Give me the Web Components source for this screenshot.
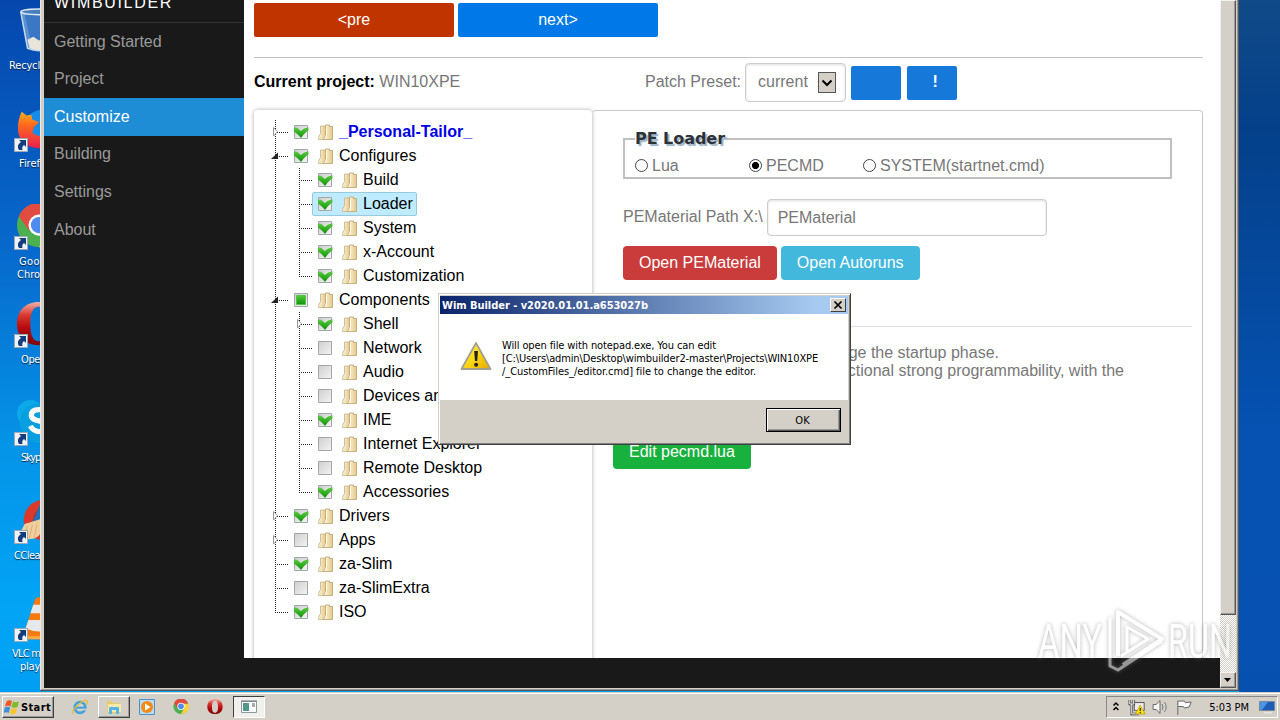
<!DOCTYPE html>
<html lang="en">
<head>
<meta charset="utf-8">
<title>Wim Builder</title>
<style>
  html, body {
    height: 100%;
    margin: 0;
    overflow: hidden;
  }
  body {
    font: 16px/1.15 "Liberation Sans", Arial, sans-serif;
  }
</style>
</head>
<body>
<desk-top></desk-top>

<script>
const define = (name, html, setup) => {
  const template = document.createElement('template')
  template.innerHTML = html

  customElements.define(name, class extends HTMLElement {
    constructor () {
      super()
      this.attachShadow({ mode: 'open' })
      this.shadowRoot.appendChild(template.content.cloneNode(true))
    }

    connectedCallback () {
      if (setup) setup(this, this.shadowRoot)
    }
  })
}

const icons = {
  recycle: `<svg viewBox="0 0 48 48"><path d="M5 4l7 38q12 5 24 0l7-38z" fill="#7aa9dc" opacity=".75"/><path d="M9 6l7 32h10V6z" fill="#2d6cbd" opacity=".7"/><path d="M12 33l6-3 6 4 8-4 2 12q-10 4-20 0z" fill="#e9e5da"/><path d="M5 4l7 38q12 5 24 0l7-38" fill="none" stroke="#c4d8ec" stroke-width="1.6"/><ellipse cx="24" cy="4" rx="19" ry="3" fill="#477fbe" stroke="#e1e8ee" stroke-width="1.5"/></svg>`,
  firefox: `<svg viewBox="0 0 48 48"><defs><linearGradient id="f" x2="0" y2="1"><stop stop-color="#ffb21c"/><stop offset=".35" stop-color="#ff6a1d"/><stop offset="1" stop-color="#e8204e"/></linearGradient></defs><circle cx="27" cy="22" r="18" fill="#168be8"/><path d="M6 6l5 4 5-1 1 5 7 3-5 5-2 5q4 6 12 3l-2 4q8 0 12-7l6 4q-8 14-22 13Q2 42 2 23q0-9 4-17z" fill="url(#f)"/></svg>`,
  chrome: `<svg viewBox="0 0 48 48"><circle cx="24" cy="22" r="23" fill="#4caf50"/><path d="M3 13A23 23 0 0 1 46 14H24l-10 14z" fill="#e24b40"/><path d="M47 16A23 23 0 0 1 24 45l10-18-6-13h18z" fill="#ffd33d"/><circle cx="24" cy="22" r="11" fill="#fff"/><circle cx="24" cy="22" r="8.5" fill="#4d8bf0"/></svg>`,
  opera: `<svg viewBox="0 0 48 48"><defs><linearGradient id="o" x2="0" y2="1"><stop stop-color="#f2b0a6"/><stop offset=".3" stop-color="#d83a30"/><stop offset=".6" stop-color="#b7090f"/><stop offset="1" stop-color="#7d0609"/></linearGradient></defs><path fill-rule="evenodd" d="M24 0C9 0 1 10 1 23s8 22 23 22 23-9 23-22S39 0 24 0zm0 5c7 0 9 7 9 18s-2 18-9 18-9-7-9-18 2-18 9-18z" fill="url(#o)"/></svg>`,
  skype: `<svg viewBox="0 0 48 48"><circle cx="15" cy="14" r="14" fill="#0ca8e8"/><circle cx="25" cy="24" r="21" fill="#079fdf"/><path d="M34 15q-3-5-10-5-8 0-8 6c0 8 17 4 17 11q0 6-8 6-7 0-10-6" fill="none" stroke="#fff" stroke-width="5.5"/></svg>`,
  ccleaner: `<svg viewBox="0 0 48 48"><circle cx="29" cy="23" r="21" fill="#d93a2b"/><circle cx="30" cy="23" r="12" fill="#b81f1b"/><path d="M26 4l7 3-10 24-7-3z" fill="#1d72ba"/><path d="M9 27l17-5q5 14-6 20Q8 45 3 39z" fill="#f0cf9d"/><path d="M12 29l-4 12M17 28l-3 14M22 27l-3 15" stroke="#d9b07c"/></svg>`,
  vlc: `<svg viewBox="0 0 48 48"><path d="M8 33l32 0 4 12H3z" fill="#f77e12"/><path d="M20 3q4-4 8 0l12 34q-16 8-31 0z" fill="#f77b0c"/><path d="M18 9h12l4 9H15z" fill="#e6e9eb"/><path d="M13 25h22l4 9q-15 6-29 0z" fill="#e6e9eb"/><path d="M3 42h42v3H3z" fill="#ffad43"/></svg>`,
  ie: `<svg viewBox="0 0 16 16"><circle cx="8" cy="8.5" r="5.3" fill="none" stroke="#3fa3e0" stroke-width="2.7"/><path d="M4 8.7h9" stroke="#3fa3e0" stroke-width="2"/><path d="M10.5 10.5h5" stroke="#d4d0c8" stroke-width="1.6"/><path d="M1.5 15Q-1 12 6 6t9-4q1 1-1 4" fill="none" stroke="#e9b92f" stroke-width="1.3"/></svg>`,
  folder: `<svg viewBox="0 0 16 16"><path d="M1 2h5l1 2h7v10H1z" fill="#e7cb68"/><path d="M2 5h13v8H2z" fill="#f8e9a6"/><path d="M3 15V9q0-1 1-1h8q1 0 1 1v6h-3v-4H6v4z" fill="#55b5e6"/></svg>`,
  player: `<svg viewBox="0 0 16 16"><path d="M.5.5h15v15H.5z" fill="#b9dcf4" stroke="#4c91c9"/><circle cx="8" cy="8" r="6" fill="#f28a15"/><path d="M6 4.5L11.5 8 6 11.500z" fill="#fff"/></svg>`,
  app: `<svg viewBox="0 0 16 14"><path d="M.5 1.500h15v11H.5z" fill="#fff" stroke="#8c9a9b"/><path d="M2 3h6v8H2z" fill="#52988a"/><path d="M11 4h3M11 6h3" stroke="#555"/><path d="M0 1h16" stroke="#678" /></svg>`,
  windows: `<svg viewBox="0 0 16 16"><path d="M2.500 2.500Q5 .5 8 2L6.500 7.500Q4 6 1 7.500z" fill="#ef5a24"/><path d="M9 2.500q3 1.500 6 0L13.500 8q-3 1.500-6 0z" fill="#7fba2a"/><path d="M.7 8.500q3-1.500 5.500 0L4.700 14q-2.500-1.500-5 0z" fill="#3c8fdd"/><path d="M7.200 9q3 1.500 6 0l-1.500 5.500q-3 1.500-6 0z" fill="#fbc52c"/></svg>`
}

const icon = (el, root) => {
  root.querySelector('i').innerHTML = icons[el.getAttribute('icon')]
}

// Stretches one line of text to a given width with letter spacing
define('fit-text', `
<style>
  :host {
    display: inline-block;
    white-space: nowrap;
  }
</style>
<slot></slot>
`, (el) => {
  const width = Number(el.getAttribute('width'))
  const natural = el.getBoundingClientRect().width
  el.style.letterSpacing = (width - natural) / el.textContent.length + 'px'
})

define('desktop-icon', `
<style>
  :host {
    color: #fff;
    display: block;
    font: 11px/13px "DejaVu Sans Condensed", "DejaVu Sans", sans-serif;
    height: 98px;
    text-shadow: 0 1px 1px #024;
  }
  .picture {
    height: 46px;
    margin-left: 15px;
    position: relative;
    width: 48px;
  }
  i svg {
    display: block;
    height: 46px;
    width: 48px;
  }
  .link {
    background: #eef2f6;
    border: 1px solid #9ab;
    bottom: 0;
    box-sizing: border-box;
    display: none;
    height: 14px;
    left: -1px;
    position: absolute;
    width: 14px;
  }
  :host([shortcut]) .link {
    display: block;
  }
  .label {
    align-items: flex-start;
    display: flex;
    flex-direction: column;
    padding-top: 5px;
  }
</style>
<div class="picture">
  <i></i>
  <svg class="link" viewBox="0 0 12 12"><path d="M4 1h7v7L9 6Q6.500 7.500 7.500 11H4Q1 6 6 3z" fill="#133d7c"/></svg>
</div>
<div class="label"><slot></slot></div>
`, icon)

define('nav-item', `
<style>
  :host {
    align-items: center;
    box-sizing: border-box;
    color: #999;
    display: flex;
    height: 37.6px;
    padding-left: 10px;
  }
  :host([active]) {
    background: #1f8dd6;
    color: #fff;
  }
</style>
<slot></slot>
`)

define('side-nav', `
<style>
  :host {
    background: #191919;
    display: block;
    width: 200px;
  }
  h1 {
    border-bottom: 1px solid #333;
    box-sizing: border-box;
    color: #fff;
    display: flex;
    align-items: flex-end;
    font-size: 16px;
    font-weight: 400;
    height: 23px;
    line-height: 20px;
    margin: 0;
    padding: 0 0 9px 10px;
  }
</style>
<h1><fit-text width="119">WIMBUILDER</fit-text></h1>
<nav>
  <nav-item>Getting Started</nav-item>
  <nav-item>Project</nav-item>
  <nav-item active>Customize</nav-item>
  <nav-item>Building</nav-item>
  <nav-item>Settings</nav-item>
  <nav-item>About</nav-item>
</nav>
`)

define('pure-button', `
<style>
  :host {
    align-items: center;
    background: var(--color, #0078e7);
    border-radius: var(--radius, 4px);
    box-sizing: border-box;
    color: #fff;
    display: inline-flex;
    height: 34px;
    justify-content: center;
    padding: 0 16px;
  }
</style>
<slot></slot>
`)

define('tree-node', `
<style>
  :host {
    background: repeating-linear-gradient(#222 0 1px, transparent 1px 2px) 11px 0 / 1px 100% no-repeat;
    color: #000;
    display: block;
  }
  :host(:last-child) {
    background-size: 1px 13px;
  }
  .row {
    align-items: center;
    background: repeating-linear-gradient(90deg, #222 0 1px, transparent 1px 2px) 11px 12px / 13px 1px no-repeat;
    display: flex;
    height: 24px;
  }
  .toggle {
    height: 24px;
    width: 24px;
  }
  .toggle path {
    display: none;
  }
  :host([closed]) .closed,
  :host([open]) .opened {
    display: block;
  }
  a {
    align-items: center;
    border: 1px solid transparent;
    border-radius: 2px;
    box-sizing: border-box;
    display: flex;
    height: 24px;
    padding-right: 3px;
    white-space: nowrap;
  }
  :host([selected]) a {
    background: #beebff;
    border-color: #99c9df;
  }
  :host([strong]) a {
    color: #0000e6;
    font-weight: 700;
  }
  .check, .folder {
    height: 24px;
    width: 24px;
  }
  .check .tick, .check .part {
    display: none;
  }
  :host([state=on]) .tick,
  :host([state=part]) .part {
    display: block;
  }
  span {
    margin-left: 2px;
  }
  .children {
    padding-left: 24px;
  }
</style>
<div class="row">
  <svg class="toggle" viewBox="0 0 24 24">
    <path class="closed" d="M9.500 7.500v8.500l4-4.250z" fill="#fff" stroke="#999"/>
    <path class="opened" d="M14 8.500v6.500H7z" fill="#222"/>
  </svg>
  <a>
    <svg class="check" viewBox="0 0 24 24">
      <defs>
        <linearGradient id="box" x2="1" y2="1"><stop stop-color="#cfcfd1"/><stop offset="1" stop-color="#f3f3f4"/></linearGradient>
        <linearGradient id="green" x2="0" y2="1"><stop stop-color="#5ccb45"/><stop offset=".5" stop-color="#2fae20"/><stop offset="1" stop-color="#149110"/></linearGradient>
      </defs>
      <path d="M5.500 5.500h13v13h-13z" fill="url(#box)" stroke="#a4a6a8"/>
      <path class="tick" d="M5 8q2.500-1 4 .5l3 2.500q3-3.500 7.500-3.500v2.500Q15.500 13 12 18 9 14 5 11.500z" fill="url(#green)"/>
      <path class="part" d="M7.500 7.500h9v9h-9z" fill="url(#green)" stroke="#52c444"/>
    </svg>
    <svg class="folder" viewBox="0 0 24 24">
      <defs><linearGradient id="fold" x2="1"><stop stop-color="#fff6dc"/><stop offset="1" stop-color="#e3c98f"/></linearGradient></defs>
      <path d="M7.500 6h5v13.500H5.500q-.5-2 2-6z" fill="url(#fold)" stroke="#c9b384" stroke-width=".8"/>
      <path d="M12.500 5h4v1.500h3V19.500H10.500l2-4z" fill="url(#fold)" stroke="#bfa366" stroke-width=".8"/>
      <path d="M13.500 6v9l-1.500 4" fill="none" stroke="#fffaf0"/>
    </svg>
    <span></span>
  </a>
</div>
<div class="children"><slot></slot></div>
`, (el, root) => {
  root.querySelector('span').textContent = el.getAttribute('label')
})

define('project-tree', `
<style>
  :host {
    background: #fff;
    border-radius: 4px;
    box-shadow: 0 0 4px #aaa;
    box-sizing: border-box;
    display: block;
    padding: 10px;
    width: 338px;
  }
</style>
<tree-node label="_Personal-Tailor_" state="on" closed strong></tree-node>
<tree-node label="Configures" state="on" open>
  <tree-node label="Build" state="on"></tree-node>
  <tree-node label="Loader" state="on" selected></tree-node>
  <tree-node label="System" state="on"></tree-node>
  <tree-node label="x-Account" state="on"></tree-node>
  <tree-node label="Customization" state="on"></tree-node>
</tree-node>
<tree-node label="Components" state="part" open>
  <tree-node label="Shell" state="on" closed></tree-node>
  <tree-node label="Network"></tree-node>
  <tree-node label="Audio"></tree-node>
  <tree-node label="Devices an"></tree-node>
  <tree-node label="IME" state="on"></tree-node>
  <tree-node label="Internet Explorer"></tree-node>
  <tree-node label="Remote Desktop"></tree-node>
  <tree-node label="Accessories" state="on"></tree-node>
</tree-node>
<tree-node label="Drivers" state="on" closed></tree-node>
<tree-node label="Apps" closed></tree-node>
<tree-node label="za-Slim" state="on"></tree-node>
<tree-node label="za-SlimExtra"></tree-node>
<tree-node label="ISO" state="on"></tree-node>
`)

define('radio-option', `
<style>
  :host {
    align-items: center;
    display: flex;
    gap: 4px;
    width: 114px;
    white-space: nowrap;
  }
  i {
    border: 1px solid #444;
    border-radius: 50%;
    box-sizing: border-box;
    flex: none;
    height: 13px;
    margin-bottom: 1px;
    width: 13px;
  }
  :host([checked]) i {
    background: radial-gradient(circle, #000 3.2px, transparent 3.9px);
  }
</style>
<i></i><slot></slot>
`)

define('loader-panel', `
<style>
  :host {
    border: 1px solid #c8c8c8;
    border-left: 0;
    border-radius: 4px;
    box-sizing: border-box;
    color: #777;
    display: block;
    flex: 1;
    padding: 27px 10px 0 21px;
  }
  .group {
    border: 2px solid #c0c0c0;
    box-sizing: border-box;
    display: flex;
    flex-direction: column;
    height: 41px;
    margin: 0 20px 0 10px;
    padding-left: 10px;
  }
  .legend {
    align-self: flex-start;
    background: #fff;
    color: #2b3238;
    font: bold 16px/20px "DejaVu Sans", sans-serif;
    height: 20px;
    margin-top: -11px;
    text-shadow: 2px 2px 1px #9db3c6;
  }
  .radios {
    display: flex;
    margin-top: 8px;
  }
  .path {
    align-items: center;
    display: flex;
    gap: 4px;
    margin: 20px 0 10px 10px;
  }
  .field {
    align-items: center;
    border: 1px solid #ccc;
    border-radius: 4px;
    box-shadow: inset 0 1px 3px #ddd;
    box-sizing: border-box;
    display: flex;
    height: 37px;
    padding: 1px 0 0 10px;
    width: 280px;
  }
  .buttons {
    display: flex;
    gap: 4px;
    margin-left: 10px;
  }
  hr {
    border: 0;
    border-top: 1px solid #ddd;
    margin: 46px 0 17px;
  }
  p {
    line-height: 18px;
    margin: 0;
    text-align: right;
    white-space: nowrap;
  }
  .phase {
    width: 386px;
  }
  .script {
    width: 511px;
  }
  .edit {
    --color: #18b13e;
    margin-top: 55px;
  }
</style>
<div class="group">
  <div class="legend"><fit-text width="90">PE Loader</fit-text></div>
  <div class="radios">
    <radio-option>Lua</radio-option>
    <radio-option checked>PECMD</radio-option>
    <radio-option>SYSTEM(startnet.cmd)</radio-option>
  </div>
</div>
<div class="path">PEMaterial Path X:\\ <div class="field">PEMaterial</div></div>
<div class="buttons">
  <pure-button style="--color: #ca3c3c">Open PEMaterial</pure-button>
  <pure-button style="--color: #42b8dd">Open Autoruns</pure-button>
</div>
<hr>
<p class="phase">ge the startup phase.</p>
<p class="script">ctional strong programmability, with the</p>
<pure-button class="edit">Edit pecmd.lua</pure-button>
`)

define('project-page', `
<style>
  :host {
    background: #fff;
    box-sizing: border-box;
    color: #777;
    display: flex;
    flex-direction: column;
    height: 658px;
    overflow: hidden;
    padding: 3px 17px 0 10px;
  }
  .steps {
    display: flex;
    gap: 4px;
  }
  .steps pure-button {
    --radius: 2px;
    width: 200px;
  }
  hr {
    border: 0;
    border-top: 1px solid #c4c4c4;
    margin: 20px 0 5px;
    width: 100%;
  }
  .bar {
    align-items: center;
    display: flex;
    height: 39px;
  }
  .project {
    box-sizing: border-box;
    padding-bottom: 1px;
    width: 391px;
  }
  b {
    color: #000;
  }
  .preset {
    align-items: center;
    border: 1px solid #ccc;
    border-radius: 4px;
    box-shadow: inset 0 1px 3px #ddd;
    box-sizing: border-box;
    display: flex;
    height: 39px;
    justify-content: space-between;
    margin: 0 5px 0 4px;
    padding: 0 9px 0 12px;
    width: 101px;
  }
  .arrow {
    background: #d4d0c8;
    border: 1px solid #555;
    box-sizing: border-box;
    height: 21px;
    width: 18px;
  }
  .bar pure-button {
    --color: #1678d9;
    --radius: 2px;
    margin-right: 6px;
    width: 50px;
  }
  .panels {
    display: flex;
    flex: none;
    height: 580px;
    margin-top: 8px;
  }
</style>
<div class="steps">
  <pure-button style="--color: #c03400">&lt;pre</pure-button>
  <pure-button>next&gt;</pure-button>
</div>
<hr>
<div class="bar">
  <div class="project"><b>Current project:</b> WIN10XPE</div>
  <span>Patch Preset:</span>
  <div class="preset">current
    <svg class="arrow" viewBox="0 0 16 19"><path d="M3.500 7.500L8 12l4.500-4.500" fill="none" stroke="#000" stroke-width="2"/></svg>
  </div>
  <pure-button></pure-button>
  <pure-button style="padding-left: 22px"><b style="color: #fff">!</b></pure-button>
</div>
<div class="panels">
  <project-tree></project-tree>
  <loader-panel></loader-panel>
</div>
`)

define('scroll-bar', `
<style>
  :host {
    background: repeating-conic-gradient(#d4d0c8 0 25%, #fff 0 50%) 0 0 / 2px 2px;
    display: flex;
    flex-direction: column;
    justify-content: space-between;
    width: 16px;
  }
  .thumb, .down {
    background: #d4d0c8;
    border: 1px solid;
    border-color: #f4f2ee #555 #555 #f4f2ee;
    box-shadow: inset -1px -1px #999;
    box-sizing: border-box;
  }
  .thumb {
    height: 615px;
  }
  .down {
    height: 16px;
  }
  svg {
    display: block;
  }
</style>
<div class="thumb"></div>
<div class="down"><svg width="14" height="14"><path d="M3 5h7L6.500 9z"/></svg></div>
`)

define('app-window', `
<style>
  :host {
    background: #d4d0c8;
    border: solid #555;
    border-width: 0 1px 1px 0;
    box-shadow: inset 1px 0 #eee9e2, inset -1px -1px #999;
    box-sizing: border-box;
    display: flex;
    padding: 0 2px 2px 4px;
  }
  .view {
    background: #191919;
    flex: 1;
  }
</style>
<side-nav></side-nav>
<div class="view"><project-page></project-page></div>
<scroll-bar></scroll-bar>
`)

define('message-box', `
<style>
  :host {
    background: #d4d0c8;
    border: 1px solid;
    border-color: #d4d0c8 #404040 #404040 #d4d0c8;
    box-shadow: inset 1px 1px #fff, inset -1px -1px #808080;
    box-sizing: border-box;
    color: #000;
    display: flex;
    flex-direction: column;
    font: 11px/13px "DejaVu Sans Condensed", "DejaVu Sans", sans-serif;
    padding: 2px 2px 2px 1px;
  }
  header {
    align-items: center;
    background: linear-gradient(90deg, #0a246a, #a6caf0 92%);
    color: #fff;
    display: flex;
    font-weight: 700;
    height: 18px;
    justify-content: space-between;
    padding: 0 2px;
  }
  .close, .ok {
    background: #d4d0c8;
    box-sizing: border-box;
  }
  .close {
    border: 1px solid;
    border-color: #fff #404040 #404040 #fff;
    height: 14px;
    width: 16px;
  }
  .body {
    align-items: center;
    background: #fff;
    box-sizing: border-box;
    display: flex;
    gap: 10px;
    height: 86px;
    padding: 0 0 1px 20px;
  }
  .lines {
    align-items: flex-start;
    display: flex;
    flex-direction: column;
    padding-top: 4px;
  }
  footer {
    display: flex;
    justify-content: flex-end;
    padding: 8px 7px 0;
  }
  .ok {
    border: 1px solid #000;
    box-shadow: inset 1px 1px #fff, inset -1px -1px #555, inset -2px -2px #999;
    height: 24px;
    line-height: 23px;
    padding-right: 2px;
    text-align: center;
    width: 75px;
  }
</style>
<header>
  <fit-text width="206">Wim Builder - v2020.01.01.a653027b</fit-text>
  <svg class="close" viewBox="0 0 14 12"><path d="M3.500 2.500l7 7M10.500 2.500l-7 7" stroke="#000" stroke-width="1.700"/></svg>
</header>
<div class="body">
  <svg width="32" height="30" viewBox="0 0 32 30">
    <defs><linearGradient id="w" x2="1" y2="1"><stop stop-color="#fff36a"/><stop offset=".5" stop-color="#fbd914"/><stop offset="1" stop-color="#e8a800"/></linearGradient></defs>
    <path d="M16 1L30.500 27h-29z" fill="url(#w)" stroke="#a5a08d" stroke-width="1.800" stroke-linejoin="round"/>
    <path d="M14.200 9h3.800l-.8 10h-2.200z" fill="#222"/><circle cx="16.100" cy="22.800" r="2" fill="#222"/>
  </svg>
  <div class="lines">
    <fit-text width="214">Will open file with notepad.exe, You can edit</fit-text>
    <fit-text width="316">[C:\\Users\\admin\\Desktop\\wimbuilder2-master\\Projects\\WIN10XPE</fit-text>
    <fit-text width="254">/_CustomFiles_/editor.cmd] file to change the editor.</fit-text>
  </div>
</div>
<footer><div class="ok">OK</div></footer>
`)

define('task-icon', `
<style>
  :host {
    align-items: center;
    box-sizing: border-box;
    display: flex;
    height: 22px;
    justify-content: center;
    width: 32px;
  }
  :host([raised]) {
    border: 1px solid;
    border-color: #fff #404040 #404040 #fff;
    box-shadow: inset -1px -1px #999;
  }
  :host([pressed]) {
    background: #f2f0ed;
    border: 1px solid;
    border-color: #404040 #fff #fff #404040;
  }
  svg {
    display: block;
    height: 16px;
    width: 16px;
  }
</style>
<i></i>
`, icon)

define('task-bar', `
<style>
  :host {
    background: #d4d0c8;
    border-top: 1px solid #d4d0c8;
    box-shadow: inset 0 1px #fff;
    box-sizing: border-box;
    color: #000;
    display: flex;
    font: 11px/13px "DejaVu Sans Condensed", "DejaVu Sans", sans-serif;
    justify-content: space-between;
    padding: 3px 2px 2px;
  }
  .left, .start, .tray {
    align-items: center;
    display: flex;
  }
  .left {
    gap: 1.8px;
  }
  .start {
    border: 1px solid;
    border-color: #fff #404040 #404040 #fff;
    box-shadow: inset -1px -1px #999;
    box-sizing: border-box;
    font-weight: 700;
    gap: 1px;
    height: 22px;
    margin-right: 8px;
    padding-left: 1px;
    width: 52px;
  }
  .start task-icon {
    flex: none;
    width: 16px;
  }
  .tray {
    border: 1px solid;
    border-color: #888 #fff #fff #888;
    box-sizing: border-box;
    height: 22px;
    padding: 0 2px 0 5px;
    width: 172px;
  }
  .tray fit-text {
    margin: 0 10px 0 16px;
  }
</style>
<div class="left">
  <div class="start"><task-icon icon="windows"></task-icon><fit-text width="30">Start</fit-text></div>
  <task-icon icon="ie"></task-icon>
  <task-icon icon="folder" raised></task-icon>
  <task-icon icon="player"></task-icon>
  <task-icon icon="chrome"></task-icon>
  <task-icon icon="opera"></task-icon>
  <task-icon icon="app" pressed></task-icon>
</div>
<div class="tray">
  <svg width="82" height="20" viewBox="0 0 82 20">
    <path d="M1.500 8.500l2.500-2.500 2.500 2.500M1.500 13l2.500-2.500L6.500 13" fill="none" stroke="#000" stroke-width="1.500"/>
    <path d="M22.500 5.500h10v8h-10z" fill="#eee" stroke="#555"/>
    <path d="M18 3v4h4V3M20 7v10h7" fill="none" stroke="#444" stroke-width="2.600"/>
    <path d="M18 3v4h4V3M20 7v10h7" fill="none" stroke="#fff"/>
    <path d="M28.500 8l5 9h-10z" fill="#fce100" stroke="#b89800" stroke-width=".7"/><path d="M28.500 11v3M28.500 15v1.200" stroke="#000"/>
    <path d="M41.500 7.500h3l4-4v13l-4-4h-3z" fill="#f6f6f6" stroke="#666"/>
    <path d="M50.500 7q2 3 0 6M53 5q3.500 5 0 10" fill="none" stroke="#777"/>
    <path d="M66.500 18V3.500M67 4h6l1 1.500 6-.5-2 5-5 1-1-1.500h-5" fill="#fafafa" stroke="#666"/>
  </svg>
  <fit-text width="40">5:03 PM</fit-text>
  <svg width="16" height="16"><path d="M.5 2.500h15v9h-15z" fill="#1d5cb8" stroke="#789"/><path d="M1 3h8L3 11H1z" fill="#4c94e6"/><path d="M5 13h8v1.500H5z" fill="#e5e5e5"/></svg>
</div>
`)

define('water-mark', `
<style>
  :host {
    display: block;
    opacity: .55;
  }
  svg {
    display: block;
    filter: drop-shadow(0 0 2px #777);
  }
  text {
    font: 400 49px Roboto, sans-serif;
  }
</style>
<svg width="202" height="70" viewBox="0 0 202 70" fill="#fff">
  <text x="4" y="53" textLength="64" lengthAdjust="spacingAndGlyphs">ANY</text>
  <text x="134" y="53" textLength="64" lengthAdjust="spacingAndGlyphs">RUN</text>
  <path d="M84 51V7l44 27-39 26" fill="none" stroke="#fff" stroke-width="4" stroke-linejoin="round"/>
  <path d="M76 13v48l8 4 44-29M93 48V22l21 12-27 17" fill="none" stroke="#fff" stroke-width="3" stroke-linejoin="round"/>
</svg>
`)

define('desk-top', `
<style>
  :host {
    background:
      linear-gradient(#104a88, #04408a 18%, #0552b2 60%, #0650b0) 1239px 0 / 41px 100% no-repeat,
      linear-gradient(#0547ad, #0768cc 34%, #0494e8 62%, #02a4f5 85%, #019df4);
    display: grid;
    grid-template-rows: 692px 28px;
    height: 720px;
    overflow: hidden;
    position: relative;
    width: 1280px;
  }
  .icons {
    box-sizing: border-box;
    overflow: hidden;
    padding-top: 8px;
    width: 41px;
  }
  app-window {
    height: 691px;
    left: 40px;
    position: absolute;
    top: 0;
    width: 1199px;
  }
  message-box {
    height: 152px;
    left: 438px;
    position: absolute;
    top: 293px;
    width: 413px;
  }
  water-mark {
    left: 1034px;
    position: absolute;
    top: 605px;
  }
</style>
<div class="icons">
  <desktop-icon icon="recycle"><fit-text width="31" style="margin-left: 9px">Recycl</fit-text></desktop-icon>
  <desktop-icon icon="firefox" shortcut><fit-text width="21" style="margin-left: 19px">Firef</fit-text></desktop-icon>
  <desktop-icon icon="chrome" shortcut><fit-text width="21" style="margin-left: 19px">Goo</fit-text><fit-text width="23" style="margin-left: 17px">Chro</fit-text></desktop-icon>
  <desktop-icon icon="opera" shortcut><fit-text width="19" style="margin-left: 21px">Ope</fit-text></desktop-icon>
  <desktop-icon icon="skype" shortcut><fit-text width="19" style="margin-left: 21px">Skyp</fit-text></desktop-icon>
  <desktop-icon icon="ccleaner" shortcut><fit-text width="26" style="margin-left: 14px">CClea</fit-text></desktop-icon>
  <desktop-icon icon="vlc" shortcut><fit-text width="28" style="margin-left: 12px">VLC m</fit-text><fit-text width="20" style="margin-left: 20px">play</fit-text></desktop-icon>
</div>
<app-window></app-window>
<message-box></message-box>
<water-mark></water-mark>
<task-bar></task-bar>
`)
</script>
</body>
</html>
